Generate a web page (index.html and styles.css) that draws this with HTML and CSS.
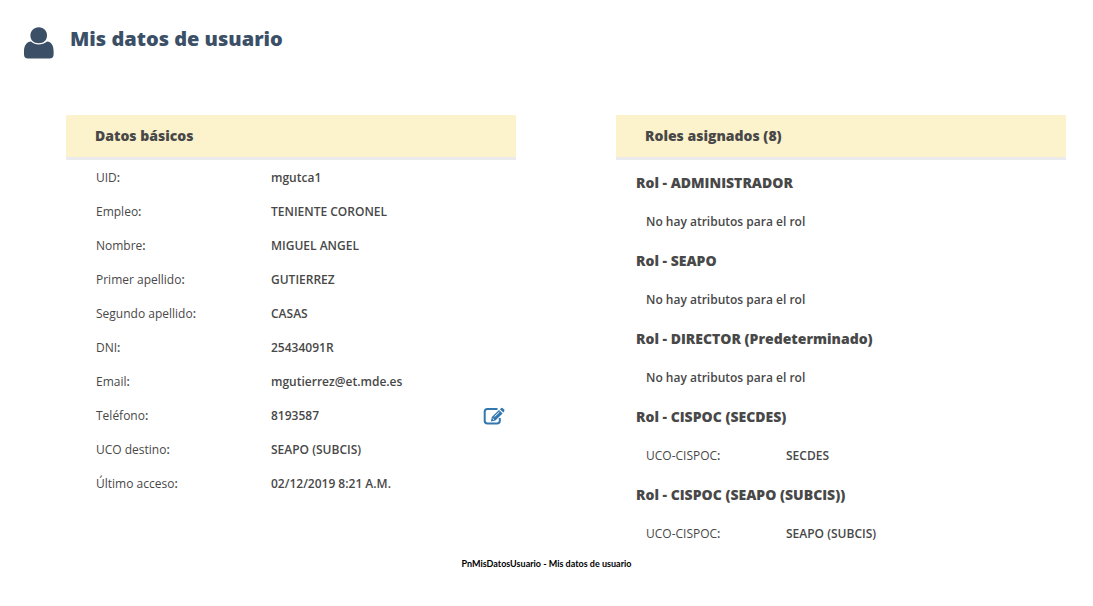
FILE: index.html
```html
<!DOCTYPE html>
<html lang="es">
<head>
<meta charset="utf-8">
<title>Mis datos de usuario</title>
<link rel="stylesheet" href="styles.css">
</head>
<body>
<header class="page-header">
  <svg class="user-icon" viewBox="0 0 30 32" aria-hidden="true"><path d="M14.700 .3C20 .3 23 4 23 8.500C23 13 20 16.200 14.700 16.200S6.400 13 6.400 8.500C6.400 4 9.700 .3 14.700 .3Z"/><path d="M7 14.500C9 16.500 12 17.400 14.700 17.400S21 16.500 23 14.500C27.500 14.500 29.600 19 29.600 24V27.500Q29.600 31.500 25.500 31.500H4Q0 31.500 0 27.500V24C0 19 2.500 14.500 7 14.500Z"/></svg>
  <h1 class="page-title">Mis datos de usuario</h1>
</header>
<main class="columns">
  <section>
    <h2 class="panel-title">Datos básicos</h2>
    <dl class="fields">
      <div class="field"><dt>UID<b>:</b></dt><dd>mgutca1</dd></div>
      <div class="field"><dt>Empleo<b>:</b></dt><dd>TENIENTE CORONEL</dd></div>
      <div class="field"><dt>Nombre<b>:</b></dt><dd>MIGUEL ANGEL</dd></div>
      <div class="field"><dt>Primer apellido<b>:</b></dt><dd>GUTIERREZ</dd></div>
      <div class="field"><dt>Segundo apellido<b>:</b></dt><dd>CASAS</dd></div>
      <div class="field"><dt>DNI<b>:</b></dt><dd>25434091R</dd></div>
      <div class="field"><dt>Email<b>:</b></dt><dd>mgutierrez@et.mde.es</dd></div>
      <div class="field"><dt>Teléfono<b>:</b></dt><dd class="editable">8193587
        <button class="edit" type="button" aria-label="Editar teléfono"><svg class="edit-icon" viewBox="0 0 22 18" aria-hidden="true"><path class="edit-box" d="M14.500 2H4.500Q1.700 2 1.700 4.800V13.800Q1.700 16.600 4.500 16.600H14Q16.800 16.600 16.800 13.800V11"/><path class="edit-pen" d="M7.900 14.500L8.800 9.900L16 3L19.600 6.600L12.400 13.600ZM16.900 2.200L18 1.200Q19 .5 19.800 1.300L21.300 2.800Q21.800 3.600 21.100 4.400L20.300 5.500Z"/><path class="edit-gap" d="M11.500 9.600L16.300 5.100M9.700 11.500L11 12.800"/></svg></button></dd></div>
      <div class="field"><dt>UCO destino<b>:</b></dt><dd>SEAPO (SUBCIS)</dd></div>
      <div class="field"><dt>Último acceso<b>:</b></dt><dd>02/12/2019 8:21 A.M.</dd></div>
    </dl>
  </section>
  <section>
    <h2 class="panel-title">Roles asignados (8)</h2>
    <div class="roles">
      <h3 class="role-name">Rol - ADMINISTRADOR</h3>
      <p class="role-empty">No hay atributos para el rol</p>
      <h3 class="role-name">Rol - SEAPO</h3>
      <p class="role-empty">No hay atributos para el rol</p>
      <h3 class="role-name">Rol - DIRECTOR (Predeterminado)</h3>
      <p class="role-empty">No hay atributos para el rol</p>
      <h3 class="role-name">Rol - CISPOC (SECDES)</h3>
      <dl class="role-field"><dt>UCO-CISPOC<b>:</b></dt><dd>SECDES</dd></dl>
      <h3 class="role-name">Rol - CISPOC (SEAPO (SUBCIS))</h3>
      <dl class="role-field"><dt>UCO-CISPOC<b>:</b></dt><dd>SEAPO (SUBCIS)</dd></dl>
    </div>
  </section>
</main>
<footer class="caption">PnMisDatosUsuario - Mis datos de usuario</footer>
</body>
</html>
```
FILE: styles.css
```css
* { box-sizing: border-box; }
body {
  margin: 0;
  background: #fff;
  color: #484848;
  font: 12px/34px "Open Sans", sans-serif;
}
h1, h2, h3, p, dl, dd { margin: 0; }
dt b, dd, .role-empty { font-weight: 600; }

.page-header {
  display: flex;
  gap: 16px;
  padding: 24px 24px 0;
  color: #3b5067;
}
.user-icon {
  width: 30px;
  height: 32px;
  margin-top: 3px;
  fill: currentColor;
}
.page-title {
  font-size: 20px;
  font-weight: 800;
  line-height: 30px;
}

.columns {
  display: grid;
  grid-template-columns: 1fr 1fr;
  gap: 100px;
  padding: 56px 27px 0 66px;
}
.panel-title {
  padding: 0 29px;
  border-bottom: 3px solid #ebebed;
  background: #fcf2cb;
  font-size: 14px;
  font-weight: 800;
  line-height: 42px;
}
.fields { padding: 1px 11px 0 30px; }
.field, .role-field {
  display: grid;
  grid-template-columns: 175px 1fr;
}
.editable {
  display: flex;
  justify-content: space-between;
  align-items: center;
}
.edit {
  display: flex;
  padding: 0;
  border: 0;
  background: none;
  cursor: pointer;
}
.edit-icon { width: 22px; height: 18px; }
.edit-box { fill: none; stroke: #3277b0; stroke-width: 2; }
.edit-pen { fill: #3277b0; stroke: #fff; stroke-width: 1; paint-order: stroke; }
.edit-gap { fill: none; stroke: #fff; stroke-width: 1; }

.roles { padding: 3px 20px 0; }
.role-name {
  font-size: 14px;
  font-weight: 800;
  line-height: 40px;
}
.role-empty, .role-field {
  padding-left: 10px;
  line-height: 38px;
}
.role-field { grid-template-columns: 140px 1fr; }

.caption {
  color: #000;
  font: 700 9px/22px Lato, sans-serif;
  text-align: center;
}
```
